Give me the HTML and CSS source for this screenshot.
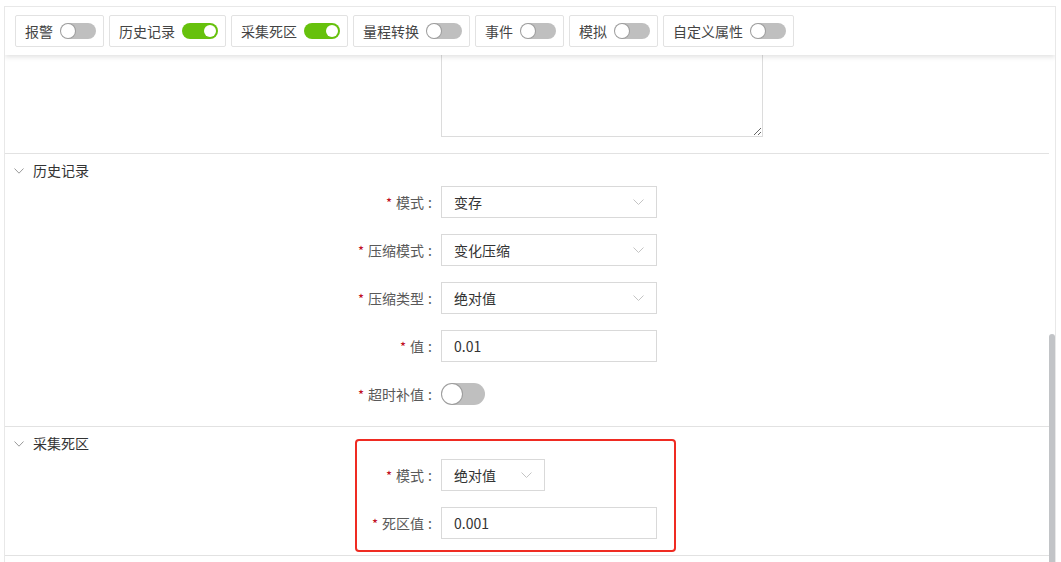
FILE: index.html
```html
<!DOCTYPE html>
<html lang="zh-CN">
<head>
<meta charset="utf-8">
<title>属性配置</title>
<link rel="stylesheet" href="styles.css">
</head>
<body>
<div class="panel">
  <div class="toolbar">
    <div class="tab"><span>报警</span><span class="sw"></span></div>
    <div class="tab"><span>历史记录</span><span class="sw on"></span></div>
    <div class="tab"><span>采集死区</span><span class="sw on"></span></div>
    <div class="tab"><span>量程转换</span><span class="sw"></span></div>
    <div class="tab"><span>事件</span><span class="sw"></span></div>
    <div class="tab"><span>模拟</span><span class="sw"></span></div>
    <div class="tab"><span>自定义属性</span><span class="sw"></span></div>
  </div>
  <div class="main">
    <div class="content">
      <div class="top-part">
        <textarea class="ta"></textarea>
      </div>

      <div class="section">
        <div class="sec-head">
          <svg class="chev" width="10" height="6" viewBox="0 0 10 6"><path d="M0.5 0.5 L5 5.2 L9.5 0.5" fill="none" stroke="#9a9a9a" stroke-width="1"/></svg>
          <span>历史记录</span>
        </div>
        <div class="row">
          <div class="label"><span class="req">*</span>模式<span class="colon">:</span></div>
          <div class="select"><span>变存</span><svg class="arrow" width="11" height="6" viewBox="0 0 11 6"><path d="M0.5 0.5 L5.5 5.5 L10.5 0.5" fill="none" stroke="#c4c4c4" stroke-width="1"/></svg></div>
        </div>
        <div class="row">
          <div class="label"><span class="req">*</span>压缩模式<span class="colon">:</span></div>
          <div class="select"><span>变化压缩</span><svg class="arrow" width="11" height="6" viewBox="0 0 11 6"><path d="M0.5 0.5 L5.5 5.5 L10.5 0.5" fill="none" stroke="#c4c4c4" stroke-width="1"/></svg></div>
        </div>
        <div class="row">
          <div class="label"><span class="req">*</span>压缩类型<span class="colon">:</span></div>
          <div class="select"><span>绝对值</span><svg class="arrow" width="11" height="6" viewBox="0 0 11 6"><path d="M0.5 0.5 L5.5 5.5 L10.5 0.5" fill="none" stroke="#c4c4c4" stroke-width="1"/></svg></div>
        </div>
        <div class="row">
          <div class="label"><span class="req">*</span>值<span class="colon">:</span></div>
          <div class="input">0.01</div>
        </div>
        <div class="row">
          <div class="label"><span class="req">*</span>超时补值<span class="colon">:</span></div>
          <span class="sw big"></span>
        </div>
      </div>

      <div class="section last">
        <div class="sec-head">
          <svg class="chev" width="10" height="6" viewBox="0 0 10 6"><path d="M0.5 0.5 L5 5.2 L9.5 0.5" fill="none" stroke="#9a9a9a" stroke-width="1"/></svg>
          <span>采集死区</span>
        </div>
        <div class="row">
          <div class="label"><span class="req">*</span>模式<span class="colon">:</span></div>
          <div class="select small"><span>绝对值</span><svg class="arrow" width="11" height="6" viewBox="0 0 11 6"><path d="M0.5 0.5 L5.5 5.5 L10.5 0.5" fill="none" stroke="#c4c4c4" stroke-width="1"/></svg></div>
        </div>
        <div class="row">
          <div class="label"><span class="req">*</span>死区值<span class="colon">:</span></div>
          <div class="input">0.001</div>
        </div>
        <div class="highlight"></div>
      </div>
    </div>
    <div class="track"><div class="thumb"></div></div>
  </div>
</div>
</body>
</html>
```

FILE: styles.css
```css
* { box-sizing: border-box; }
html, body { margin: 0; padding: 0; background: #fff; overflow: hidden; }
body {
  font-family: "Noto Sans CJK SC", "Noto Sans", sans-serif;
  font-size: 14px;
  color: #333;
  height: 562px;
}
.panel {
  margin: 6px 5px 0 4px;
  border: 1px solid #e8e8e8;
  border-bottom: none;
  height: 556px;
  display: flex;
  flex-direction: column;
  overflow: hidden;
}
.toolbar {
  display: flex;
  gap: 5px;
  padding: 8px 10px;
  background: #fff;
  position: relative;
  z-index: 2;
  box-shadow: 0 2px 5px rgba(0, 0, 0, 0.12);
}
.tab {
  display: flex;
  align-items: center;
  height: 32px;
  padding: 0 7px 0 9px;
  border: 1px solid #e2e2e2;
  border-radius: 2px;
  gap: 7px;
  color: #444;
  line-height: 1;
}
.sw {
  position: relative;
  display: inline-block;
  width: 36px;
  height: 16px;
  border-radius: 8px;
  background: #bfbfbf;
  flex-shrink: 0;
}
.sw::after {
  content: "";
  position: absolute;
  top: 1px;
  left: 1px;
  width: 14px;
  height: 14px;
  border-radius: 50%;
  background: #fff;
  box-shadow: 0 0 0 1px rgba(0, 0, 0, 0.18);
}
.sw.on { background: #66c10c; }
.sw.on::after {
  left: auto;
  right: 2px;
  top: 2px;
  width: 12px;
  height: 12px;
  box-shadow: none;
}
.sw.big {
  width: 44px;
  height: 22px;
  border-radius: 11px;
}
.sw.big::after {
  width: 20px;
  height: 20px;
  top: 1px;
  left: 1px;
}
.main {
  flex: 1;
  display: flex;
  min-height: 0;
}
.content {
  flex: 1;
  min-width: 0;
}
.track {
  width: 6px;
  flex-shrink: 0;
}
.thumb {
  margin-top: 279px;
  height: 240px;
  border-radius: 3px;
  background: #c2c4c7;
}
.top-part {
  height: 98px;
  overflow: hidden;
  display: flex;
  flex-direction: column;
  justify-content: flex-end;
  padding-bottom: 16px;
}
.ta {
  flex-shrink: 0;
  display: block;
  margin: 0 0 0 436px;
  width: 322px;
  height: 130px;
  border: 1px solid #dcdcdc;
  border-radius: 0;
  resize: both;
  outline: none;
  font: inherit;
}
.section {
  border-top: 1px solid #e2e2e2;
  position: relative;
}
.section.last { border-bottom: 1px solid #e2e2e2; }
.sec-head {
  height: 32px;
  display: flex;
  align-items: center;
  padding-left: 9px;
  gap: 9px;
  color: #333;
}
.chev { display: block; margin-top: 1px; }
.row {
  display: flex;
  align-items: center;
  height: 32px;
  margin-bottom: 16px;
}
.label {
  width: 436px;
  flex-shrink: 0;
  display: flex;
  justify-content: flex-end;
  align-items: center;
  color: #595959;
}
.req {
  color: #c0061c;
  margin-right: 4px;
  font-size: 13px;
}
.colon {
  margin: 0 9px 0 4px;
}
.select, .input {
  width: 216px;
  height: 32px;
  border: 1px solid #d9d9d9;
  display: flex;
  align-items: center;
  padding: 0 12px;
  color: #333;
  background: #fff;
}
.select { justify-content: space-between; }
.select.small { width: 104px; }
.arrow { display: block; }
.highlight {
  position: absolute;
  left: 350px;
  top: 12px;
  width: 321px;
  height: 113px;
  border: 2px solid #ef2b22;
  border-radius: 4px;
  pointer-events: none;
}
```
